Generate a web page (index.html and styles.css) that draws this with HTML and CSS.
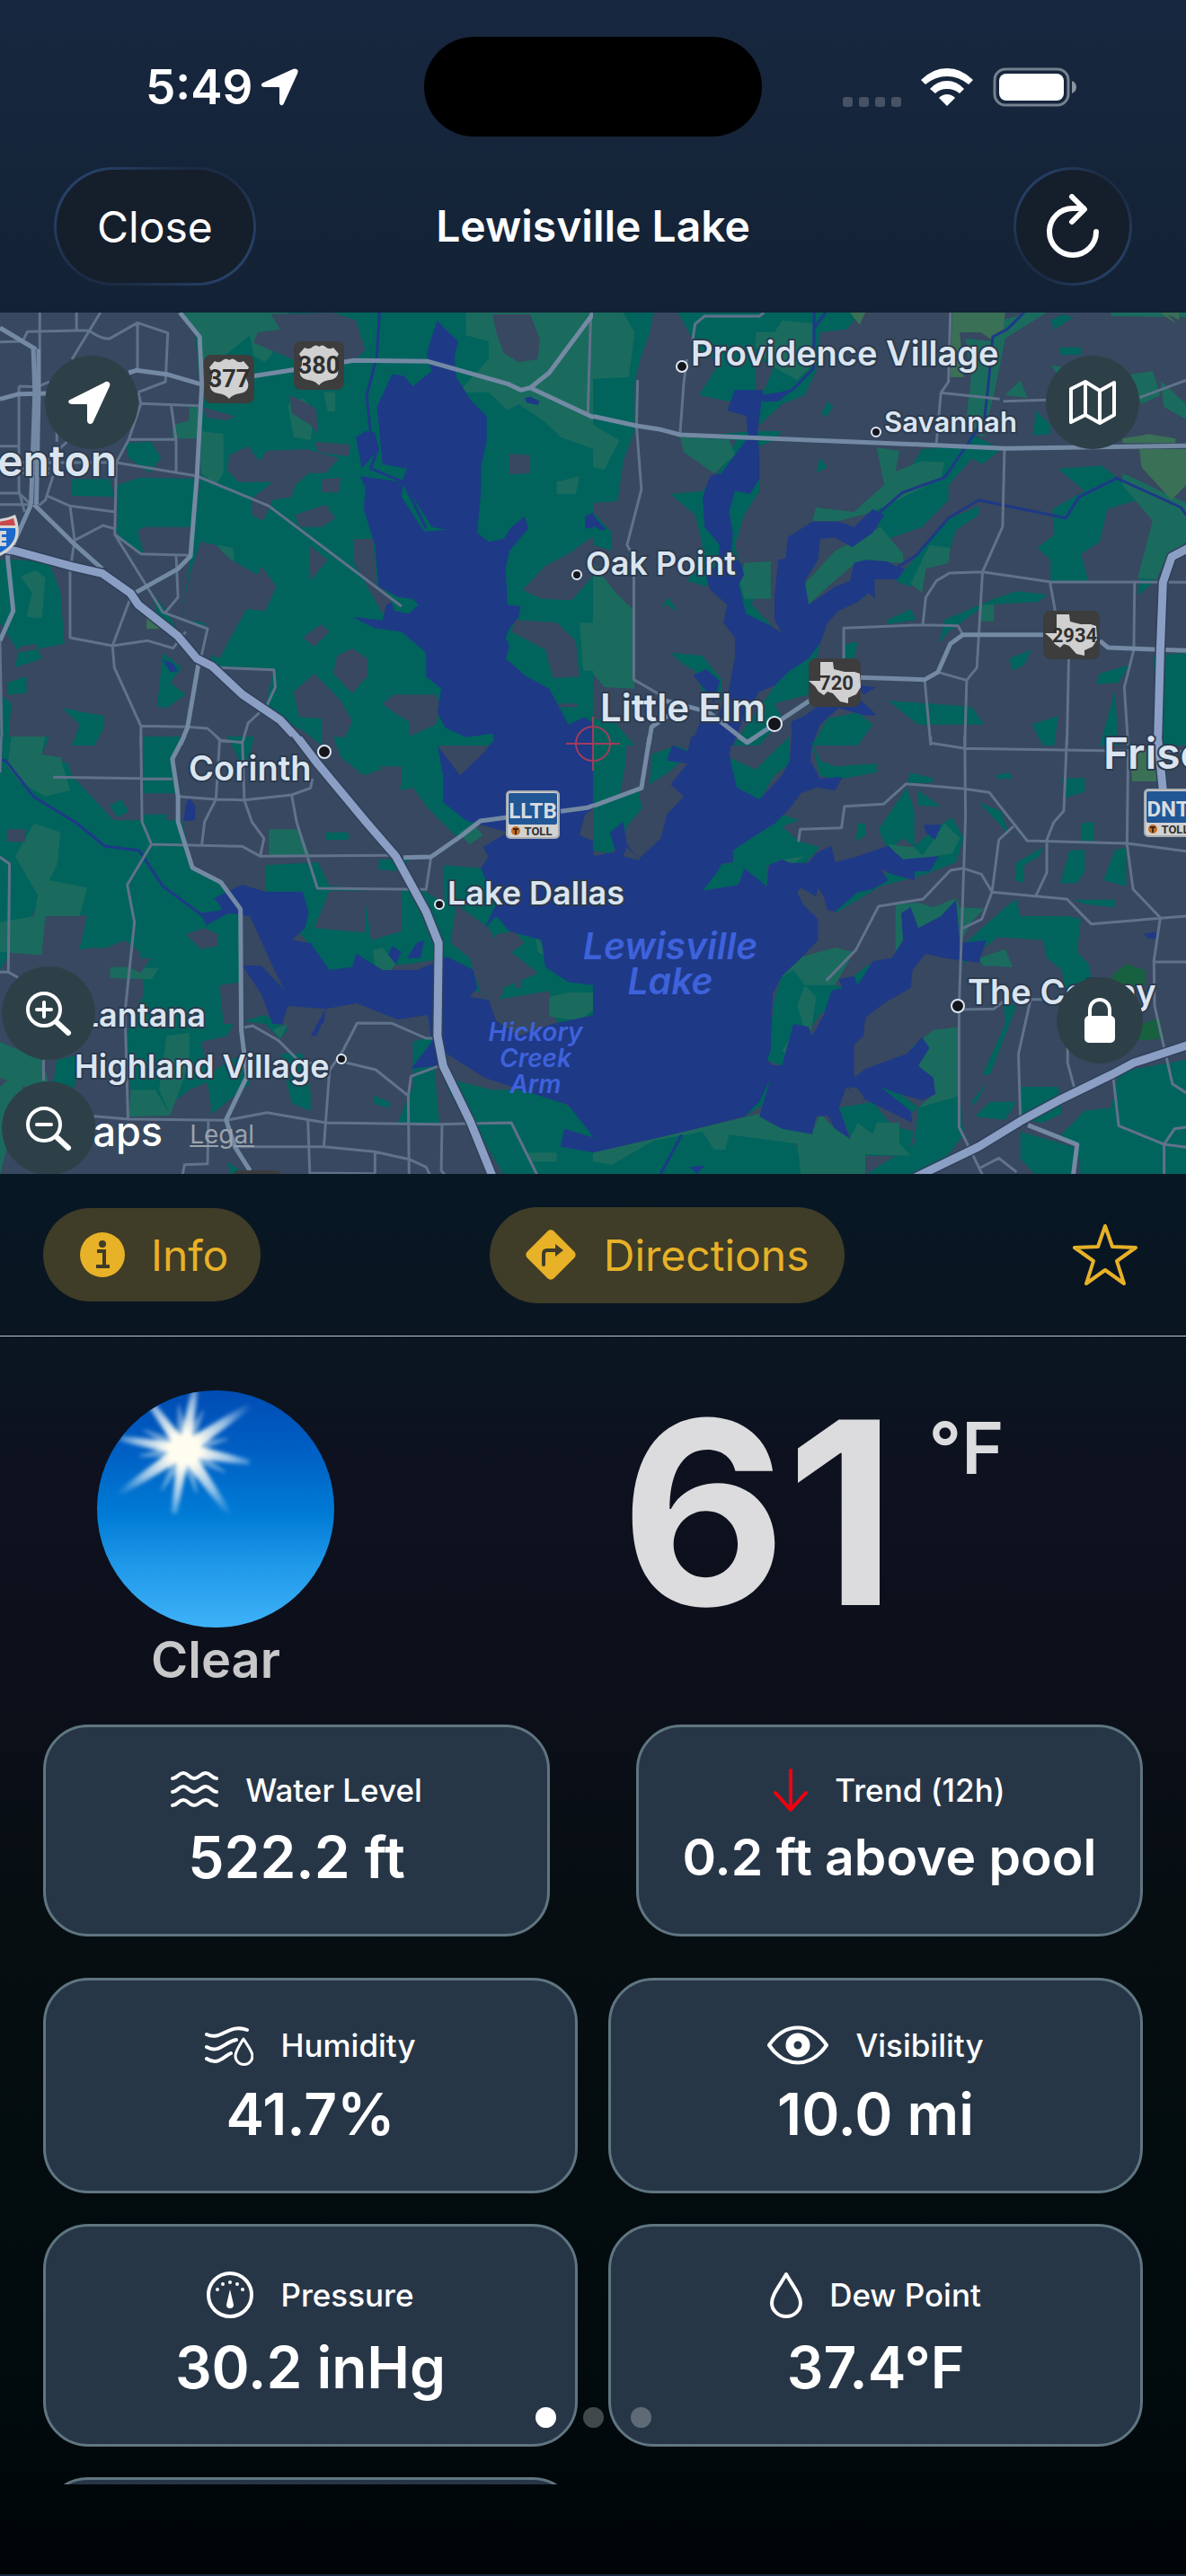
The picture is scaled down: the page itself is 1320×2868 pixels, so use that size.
FILE: index.html
```html
<!DOCTYPE html>
<html lang="en">
<head>
    <meta charset="UTF-8">
    <meta name="viewport" content="width=device-width, initial-scale=1">
    <title>Lewisville Lake</title>
    <link rel="stylesheet" href="styles.css">
</head>
<body>
    <header class="header">
        <div class="status">
            <div class="status-left">
                <span class="time">5:49</span>
                <svg class="status-arrow" viewBox="0 0 44 44"><path d="M41 2C43 3 43 4 42 7L27 40C26 43 22 43 22 39L22 23Q22 22 21 22L5 22C1 22 1 18 4 17L37 2Q39 1 41 2Z" fill="#fff"/></svg>
            </div>
            <div class="island"></div>
            <div class="status-right">
                <div class="signal"><i></i><i></i><i></i><i></i></div>
                <svg class="wifi" viewBox="0 0 58 42" fill="#fff">
                    <path d="M0 13Q13 0 29 0T58 13L53 18Q42 9 29 9T5 18Z"/>
                    <path d="M10 23Q18 14 29 14T48 23L43 28Q37 23 29 23T16 28Z"/>
                    <path d="M20 33Q24 29 29 29T38 33L29 42Z"/>
                </svg>
                <svg class="battery" viewBox="0 0 94 44">
                    <rect x="2" y="2" width="82" height="40" rx="12" fill="none" stroke="#75808f" stroke-width="3"/>
                    <rect x="7" y="7" width="72" height="30" rx="8" fill="#fff"/>
                    <path d="M88 15Q93 17 93 22T88 29Z" fill="#8a93a0"/>
                </svg>
            </div>
        </div>
        <div class="nav">
            <button class="glass close">Close</button>
            <h1>Lewisville Lake</h1>
            <button class="glass refresh" aria-label="Refresh">
                <svg viewBox="0 0 58 72" fill="none" stroke="#fff" stroke-width="6" stroke-linecap="round" stroke-linejoin="round">
                    <path d="M55 42A26 26 0 1 1 29 16H41"/><path d="M28 3L42 17L28 31"/>
                </svg>
            </button>
        </div>
    </header>

    <section class="map">
        <svg class="map-art" viewBox="0 0 1320 959" preserveAspectRatio="xMidYMid slice">
            <defs>
                <path id="us" d="M12 7q5 3 9-1q4-3 7 0q4-3 7 0q4 4 9 1l6 7q-6 8-1 17q2 10-9 12q-8 1-12 6q-4-5-12-6q-11-2-9-12q5-9-1-17z" fill="#d0d0d0"/>
                <path id="texas" d="M15 4L29 4L30 12L42 15L53 15L59 17L60 32L55 40L46 44L46 50L37 48L29 39L23 37L19 41L13 37L9 31L2 25L15 25Z" fill="#d0d0d0"/>
            </defs>

            <!-- north west tile -->
            <svg class="tile" x="0" y="-8" width="661" height="490" viewBox="0 0 1568 1470" preserveAspectRatio="none">
                <path class="wood" d="M475 24H1568V1470H850L800 1420L740 1385L700 1340L723 1217L560 1205L548 1080L480 1050L503 838L530 570V300L515 100ZM330 460L400 455L425 510L395 560L340 510ZM190 580H290L302 640L190 635ZM310 600L370 575L520 580L508 740L380 740L340 770L310 760ZM50 850L130 860L160 960L170 1130L50 1160L0 1060V850ZM20 1260L70 1240V1295L20 1300ZM165 1345L225 1360L275 1370V1410L250 1470H190L210 1400ZM430 1160L480 1210L450 1260L490 1300L440 1345L415 1340ZM400 960L440 1020L470 1090L420 1050ZM40 1210L110 1180L95 1130L50 1140ZM0 1300L30 1330L20 1470H0ZM300 740L360 735L380 830L320 780Z"/>
                <path class="meadow" d="M475 24H760L770 80L700 190L670 170L660 100L560 200L533 190L520 95ZM760 330L800 310L830 350L820 450L775 440ZM530 420L590 430V560L570 600L530 560ZM575 800L615 810L625 940L655 945L630 1015L570 1010ZM1230 24H1568V480L1480 440L1440 390L1370 330L1340 350L1290 290H1210L1290 180V120L1230 100ZM55 905L95 885L120 910L110 1045L70 1040L85 960ZM455 400L500 385V340H525V445H455ZM855 290H885V355H865ZM1470 590L1530 570L1520 630H1470ZM1530 1060H1568V1220H1540Z"/>
                <path class="land" d="M715 30L880 24L940 50L965 150L930 190L800 195L670 125L680 90L740 80ZM605 500L655 470L685 520L705 485L810 480L895 510L860 560H815L780 600L770 640L720 650L695 720L665 700V645L720 590H630L600 550ZM765 300L800 320L835 345L840 430L820 400L770 360ZM535 340L620 370L600 385L545 375ZM830 455L925 465L920 505L840 490ZM850 580L900 575L895 625H850ZM780 700L860 665L885 710L850 740H790ZM530 790L570 800L610 850L680 900L690 870L730 940L700 1020L650 1015L600 1130L580 1180L545 1160L540 1060L480 1050L500 900ZM815 800L865 850L820 920ZM935 780H985L995 930L1055 1000L1010 1030L975 950L935 860ZM1010 1330L1040 1300L1150 1300L1165 1340L1150 1400L1080 1440V1390L1040 1360ZM775 1290L830 1230L900 1320L930 1390L900 1470H850V1380L790 1375ZM890 1170L930 1145L970 1180V1240L930 1295L880 1230ZM830 1080L850 1065L870 1090L830 1140L800 1110ZM1300 30H1400L1425 110L1420 180L1370 190L1330 160L1310 90ZM1568 770L1500 830L1440 870L1380 950L1430 980L1510 985L1568 900ZM1360 1050L1470 1060L1520 1120L1530 1240L1460 1245L1440 1150L1350 1090ZM1345 495L1400 500V560L1345 565ZM1475 1330H1525V1342H1475Z"/>
                <path class="water" d="M1155 50L1180 85L1210 120L1200 170L1205 240L1245 320L1285 370V450L1270 540V620L1260 760L1290 790L1330 780L1350 740L1385 705L1395 745L1345 820L1335 880L1340 1000L1375 1005L1370 1040L1345 1080L1335 1110L1345 1140L1335 1180L1390 1240L1450 1280L1480 1350L1500 1400L1545 1375L1568 1400V1470H1310L1300 1430L1230 1442L1175 1410L1155 1360L1165 1280L1125 1240V1160L1060 1090L990 1078L930 1040L1010 1052L1020 1000L1060 980L1000 940L990 800L975 740L960 680L965 610L950 570L1060 590L1075 545L1010 530L1000 400L995 340L1035 230L1065 235L1090 270L1140 220L1125 160ZM940 440L965 420L990 425L1000 480L955 545ZM1385 310L1400 305L1425 320L1420 333L1390 325ZM430 1185L455 1195L470 1220L450 1225ZM1545 705L1568 690V745H1545Z"/>
                <path class="wood" d="M1065 590L1120 700L1140 740L1180 750L1120 755L1060 640ZM1030 970L1090 980L1105 1000L1080 1030L1040 1020ZM1110 90L1150 50L1125 170L1100 200Z"/>
                <path class="olive" d="M387 1048H410L425 1080H387Z"/>
                <path class="stream" d="M1002 24L995 170L968 300L978 420L998 480L978 545L1065 590L1125 745"/>
                <path class="road" d="M105 24V145M202 24V85M265 24L190 180M0 122L60 120L72 88L235 83Q260 110 288 112L363 58L443 92L437 255L365 290M363 58V217M370 328L525 335M452 335L465 450V555M340 448H465M365 290L372 328L340 448L307 525L303 765L430 1025L548 1080L530 1180M307 525L520 570L710 670L1060 1005M50 270V620L65 690M50 270L100 272L130 255M0 470H50M0 627H50L82 665H0M122 635L185 670L305 690M185 670L197 785L185 885V1110L297 1137L390 1120L457 1145L490 1090M197 785L272 735L300 745M303 765L372 830L503 835M465 835L470 975L437 1025M345 975L297 1137L302 1210L372 1405V1470M372 1405L495 1408L548 1413L585 1455L640 1460L655 1395L685 1360M580 1210L723 1217L727 1275L705 1335M0 1120L5 1470M1560 24L1552 360M150 420V455M178 455L120 520M0 525L300 525M60 545H130M60 560H130M140 570L120 650L103 668"/>
                <path class="highway" d="M0 75L95 147M88 145L92 290L82 665M102 145V290L96 665M0 313L50 296L125 294M340 225L360 217L440 230L535 265M660 238L935 184L1130 187L1340 262L1375 283L1400 275L1568 375M475 24L527 105L533 265L520 570L503 838L470 880L350 965M1568 24L1450 225L1400 275M90 665L190 790L270 880M82 665L20 840L35 1020L0 1120M525 1190L510 1300L495 1410L475 1470"/>
                <path class="freeway-edge" d="M-10 810L40 820L150 858L190 872L270 895L345 962L365 1000L470 1105L520 1180L560 1205L640 1300L740 1385L805 1475"/>
                <path class="freeway" d="M-10 810L40 820L150 858L190 872L270 895L345 962L365 1000L470 1105L520 1180L560 1205L640 1300L740 1385L805 1475"/>
            </svg>

            <!-- north east tile -->
            <svg class="tile" x="660" y="-8" width="660" height="490" viewBox="0 0 1568 1470" preserveAspectRatio="none">
                <path class="wood" d="M0 24H160L150 90L125 180L110 260V420L80 520L65 655L0 660ZM300 24H710L670 80L600 90L590 220L560 300L500 330L440 400L430 340L280 300L330 200L300 150ZM225 24H300L340 60L300 180L270 130ZM430 420H500L480 450L440 470L440 620L400 700L375 800L385 850L430 950L420 1000L480 1080L400 1060L380 980L310 900L300 940L250 920L290 800L270 700L205 630L290 620L340 540L380 450L230 440ZM870 480L980 470L1010 500L940 600L940 650L870 740L760 790L740 690L800 620ZM1000 430L1080 480L1030 530L985 500ZM1020 670L1020 700L960 750L940 830L870 880L840 940L800 920L860 830L930 720ZM1230 545L1345 535L1390 580L1470 630L1440 650L1360 680L1340 790L1290 830L1310 920H1210V850L1175 810L1220 765L1215 680L1300 620ZM1445 910L1490 910L1470 940L1440 970ZM1060 980L1120 955L1200 965L1180 990L1040 1000L940 1090L915 1130L930 1050ZM780 1050L840 1015L855 1050L780 1065ZM205 1160L290 1170L340 1250L340 1320L290 1290L270 1220L240 1200ZM520 1200L600 1130L570 1300L480 1330L500 1380L440 1470H370ZM620 1380L700 1360L740 1400L700 1470H580ZM780 1320L1000 1340L1035 1400L860 1400ZM0 1380L60 1395L110 1470H0ZM1480 1170L1568 1160V1470H1500ZM1100 1180L1160 1150L1140 1200L1110 1220ZM1340 1230L1420 1200L1390 1260L1330 1265ZM180 1010L200 975L225 1025L195 1000ZM590 560L600 510L620 540ZM605 360L620 320L635 340L615 375ZM1235 140H1290V165H1235ZM1170 350L1210 400V430L1165 435ZM1240 30L1270 40L1220 80L1210 50ZM0 690L50 760V820L0 800ZM660 1180L665 1130L700 1125L690 1180ZM1160 1400L1230 1370L1220 1470H1190ZM1380 1290L1390 1470H1340L1360 1380Z"/>
                <path class="meadow" d="M0 24H80L110 90L95 240L0 245ZM0 400L70 450L30 550L0 540ZM430 90H480L500 50L580 60L588 190L540 250L470 200L430 140ZM230 440L360 450L375 500L320 560L240 490ZM750 475L810 485L800 555L870 520L930 525L920 580L740 690L650 720H580L590 675L690 690L770 600ZM985 110L1050 120L1080 50L1150 24H1200L1090 110L1060 300L1030 440L985 400L1000 240ZM400 860L470 855V980H400L390 930ZM640 820L760 740L820 830V860L700 855L620 940L570 1000L560 930ZM890 800L945 810L940 860L880 880L870 960L840 930ZM0 860L60 960L110 1020V1280L30 1275L0 1230ZM1025 1000H1060V1055H1025ZM1400 560L1568 660V790L1510 860L1490 915L1440 910L1480 720L1400 600ZM1090 300L1130 250L1150 310ZM1210 200L1260 210L1230 235ZM1420 230L1480 220L1500 300L1450 330ZM1500 250L1568 330V380L1510 340ZM1370 24H1568V40L1370 36Z"/>
                <path class="olive" d="M950 24H1090L1085 80L1055 115L1025 90H970L980 240H945ZM1445 480H1568V600L1530 650L1450 540ZM1400 445L1470 430L1540 445V460H1400ZM680 24H720L705 65ZM1500 24H1550V70Z"/>
                <path class="land" d="M430 180L480 200L450 290L430 280ZM1520 30L1568 100V60Z"/>
                <path class="water" d="M375 283H450L435 420L440 500V580L415 630L375 620L360 690L370 760L365 830L390 860L400 900L385 930L405 1030L470 1070L500 1095L480 1050V970L490 850L510 845L515 775L580 722L650 722L690 740L740 680L770 700L740 760L685 808L640 775L600 780L595 850L560 920L570 1000L640 940L680 920L690 860L720 850L780 855L800 872L825 880L805 915L745 915V980L730 960L700 990L650 1020L620 1060L600 1130L570 1180L520 1220L480 1270L440 1290L400 1370L370 1470H260L290 1370L330 1370L360 1280L375 1180V1110L345 1060L355 1000L310 950L300 910L330 860L335 800L295 740L290 640L310 570L340 560L375 500L410 440L405 370L355 350ZM525 1390L560 1370L600 1335L700 1310L750 1368L720 1370L650 1345L600 1400L580 1470H525ZM265 1235L300 1215L335 1255L320 1330L300 1290ZM440 300L525 285L490 320L450 322ZM700 1270L750 1275L715 1300ZM0 700L35 750H20L0 735Z"/>
                <path class="stream" d="M585 24L583 210L525 285L440 310M615 24L585 75M1140 24L1095 80L1057 105L1045 270L1035 380L930 575L818 625L755 695M1568 700L1555 675L1385 577L1285 640L1250 710L1020 650L940 710L855 835L800 880"/>
                <path class="road" d="M118 250L115 402L128 615L90 800L108 840V1250L190 1310M452 24L440 36H295L270 62L263 120M248 180L240 260L230 432M945 24L940 255L920 292L908 460M920 292L1075 313M1085 320L1200 316M1445 308L1568 250M1088 480L1083 740L1030 890L1015 1210L988 1252L983 1470M663 1180V1078L872 1067L965 1070L978 1100M872 1067L880 975L908 920L943 894L1030 890L1208 923L1568 925M1208 923L1222 1020M1432 925L1430 1150L1405 1275L1415 1470M912 1225L988 1252M877 1250L893 1470M1258 1180L1253 1470"/>
                <path class="highway" d="M0 370L115 402L180 415L230 432L870 465L1090 478L1568 469M408 1460L575 1318M705 1243L877 1250L912 1225L945 1130L978 1100H1190M1340 1120L1362 1143L1568 1153M190 1320L305 1358L408 1460M145 1480L155 1408L210 1360"/>
                <path class="freeway-edge" d="M1575 810L1530 840L1507 925L1500 1150L1493 1475"/>
                <path class="freeway" d="M1575 810L1530 840L1507 925L1500 1150L1493 1475"/>
            </svg>

            <!-- south west tile -->
            <svg class="tile" x="0" y="472" width="661" height="490" viewBox="0 0 1568 1470" preserveAspectRatio="none">
                <path class="wood" d="M0 0H130L110 60L180 90L190 130L300 280H480L510 440L580 490L620 560H640V900L600 1000L530 1020L560 1150L500 1180L420 1260L345 1180L330 1000L380 860L370 720L330 680L270 710H210L230 600L120 580V520L0 780ZM380 0H490L460 80L470 190H380ZM600 0H670L660 60L640 100ZM880 0L1160 30L1205 220L1230 280L1260 290L1210 340L1130 240L1090 170L1060 180L1030 100L960 130L900 70ZM700 430L840 420L870 500L960 510L980 680L1060 650V510H1110L1180 560V740L1080 760L940 770L860 790L820 700L700 520ZM380 260L440 260V280H380ZM860 320H920V345H860ZM1000 410H1080L1060 450L1000 445ZM1170 430L1280 440L1350 640L1440 650L1450 740L1568 830V1100L1480 1000L1450 850L1310 880L1240 840L1180 760ZM740 1060H800L820 1190V1250L770 1225ZM1090 1020L1140 1000L1160 1290H1050L1090 1170ZM1170 1140L1300 1180L1420 1180L1568 1280V1464H1330L1300 1400L1250 1290L1190 1200ZM600 1420L650 1464H610ZM150 1080L220 1060L180 1240L130 1250ZM985 1200L1030 1220V1240L990 1230ZM640 950L700 930L760 980L740 1010L700 960ZM290 230L320 210L340 250L310 270ZM545 1130L640 1060L660 1160L560 1260Z"/>
                <path class="meadow" d="M30 0H120L110 60L160 70L185 180L120 200L50 150L20 100ZM90 290L160 320L150 430L130 480L230 505L210 600L120 600L110 730L0 720V620L90 600L100 530L40 400ZM290 760L345 770L420 775L400 810L290 808ZM710 310H790L820 400L710 395ZM345 1180H410L450 1265L340 1270ZM440 1000L500 990V1090L450 1265L420 1180ZM0 1020L110 1080L130 1160L60 1170L0 1464ZM1210 320L1250 290L1275 330L1240 360ZM985 715L1010 705L1045 760L1025 790L990 765ZM1410 645L1450 740L1420 720ZM1450 870L1500 855H1568V910L1530 950L1450 935ZM1390 1390H1470V1420H1400ZM720 980L760 960L740 1010Z"/>
                <path class="land" d="M18 310H66V352H18ZM190 720L240 705L340 710L360 740L400 740L370 790L340 770H290V805L330 810L310 870H250L240 800L190 770ZM490 660L540 640L575 660V700L530 710ZM870 515H965V655L830 640ZM1205 560L1290 640L1310 680L1420 790L1330 840L1270 860L1240 740L1190 690ZM1310 660L1360 650L1385 690L1340 730L1310 700ZM1290 800L1330 850L1310 900L1280 860ZM580 830L640 820L690 900L640 960H590ZM1000 100H1060L1060 170L1020 120ZM0 1140L20 1150L0 1170Z"/>
                <path class="water" d="M1310 0H1568V230L1530 330L1568 350V830L1500 820L1440 770L1430 680L1345 650L1310 600L1280 640L1310 560L1270 440L1290 400L1275 370L1340 320L1230 280L1170 220V130L1155 30L1215 130L1280 50ZM565 540L640 495L700 518H800L815 590L805 640L770 680L820 690L870 780L930 770L940 725L1010 780H1100L1140 760L1180 735L1250 780L1260 840L1240 870L1290 880L1310 950L1370 1000L1460 960L1568 930V1390L1480 1370L1490 1310L1568 1340L1500 1230L1400 1190L1280 1140L1180 1060L1150 1100L1085 1110L1140 1020L1130 930L1050 945L940 890L850 960L835 1000L820 1000L860 910L760 900L745 960L720 960L690 860L640 765H690L750 845L710 740L660 600L605 590L545 630L530 590L590 580ZM500 205L515 230V280L485 282L490 230ZM1025 730L1035 700L1060 720L1045 760ZM1100 690L1120 680L1110 740L1075 740Z"/>
                <path class="land" d="M1530 330L1568 310V240L1545 260ZM860 910L945 890L960 920L900 940L850 1000ZM1362 770H1375V840H1362Z"/>
                <path class="stream" d="M0 78L15 80L88 200L200 287L278 367L367 380L430 500L540 603L600 575"/>
                <path class="road" d="M372 0L375 285L400 360L336 495L355 620L330 920L338 1278M140 136L455 142M470 200L570 210L645 212L770 195L820 172L825 140M570 0L580 12L640 20L645 0M640 20L645 212L665 285L697 340L687 400M580 12L570 210L540 285L533 360M770 195L783 285L838 507L1125 511L1138 402M400 360L640 367L687 400L1045 397M645 972L667 966L735 1015L790 1085L870 1100M855 1370L870 1115L905 1050L943 957L1035 958L1125 1008H1145M915 1090L992 1113L1078 1200L1080 1464M1155 1102L1085 1135L1078 1200M248 1268L338 1278L597 1282L705 1256L860 1290L1160 1295L1350 1290L1418 1464M550 1285L548 1427L487 1430L482 1464M813 1280L818 1464M620 1370H855L990 1387L1080 1412L1125 1438L1135 1464M990 1387V1464M818 1458L990 1460M1167 1295L1165 1450L1175 1464M115 1080V1150M3 0L0 120M0 403L25 425L22 787L48 805M0 787H22"/>
                <path class="highway" d="M490 -10L455 75L470 200V285L508 438L583 487L635 577L637 980L652 1135L597 1280L620 1370L660 1450M1065 404L1138 402L1220 330L1268 282L1340 270M1480 250L1550 238L1568 230"/>
                <path class="freeway-edge" d="M778 -10L835 85L965 283L1045 400L1125 585L1158 690L1155 1000L1170 1100L1243 1290L1302 1475"/>
                <path class="freeway" d="M778 -10L835 85L965 283L1045 400L1125 585L1158 690L1155 1000L1170 1100L1243 1290L1302 1475"/>
            </svg>

            <!-- south east tile -->
            <svg class="tile" x="660" y="472" width="660" height="490" viewBox="0 0 1568 1470" preserveAspectRatio="none">
                <path class="wood" d="M0 0H90L85 100L70 200L120 180L130 240L90 300L80 350L45 390L0 380ZM155 60L220 30L260 50L200 120L150 160ZM360 70L430 110L470 60L520 0L520 90L480 130L440 215L380 180ZM575 0L600 80L640 100L750 90V120L640 145L600 130ZM290 515L330 430L370 420V380L430 330L480 290L500 260L545 280L500 300L545 350L600 370L560 425L460 430L460 505L385 500ZM700 290H720V330L695 350ZM755 310L830 170L850 250V370L820 340L780 380ZM840 120L900 140L895 155H830ZM860 180L920 235L860 230ZM900 310L950 270L980 340L960 420L880 460L760 500L640 590V560L760 480L820 400ZM1240 140L1300 138V185L1250 205ZM1290 290L1325 285V350H1290ZM1260 380L1300 378V450L1280 490H1235ZM1350 480L1380 380L1410 370V500ZM1120 420L1190 370L1180 400L1140 430V490L1115 480ZM1100 560L1120 545L1130 600H1260L1290 610L1280 720L1310 760L1330 870L1250 860L1240 780L1200 740L1190 680L1070 670L980 760L975 700ZM1270 545H1380V570L1300 560ZM1085 880L1120 900L1050 1130L1030 1130L1090 960ZM1000 1220L1040 1160L1010 1230ZM1010 1270L1050 1220L1120 1220L1090 1280ZM1130 1170H1230L1240 1260L1190 1290L1130 1280ZM500 790L550 735L640 830L680 850L600 930L560 1000L500 1100L460 1080L480 880ZM650 840L730 760L740 790L680 870ZM860 1240L970 1200L980 1330L900 1464H720L850 1360ZM1130 1320L1270 1370V1464H1170L1130 1410ZM1390 1120L1568 1080V1464H1290L1280 1370L1230 1340L1300 1250L1370 1240ZM740 1170L790 1170L860 1240L840 1260L740 1190ZM0 1400L240 1320L400 1290L530 1330L560 1464H0ZM440 1200L470 1140L450 1230L400 1270ZM650 1240L740 1220L790 1300L850 1320L830 1400H700ZM1065 130L1100 120L1110 140L1070 142ZM1020 220L1080 250L1100 330L1080 300Z"/>
                <path class="meadow" d="M540 740L640 705L690 720L640 830L560 830L530 780L490 810ZM480 415L560 400L530 425ZM870 400L930 290L970 340L950 390L880 405ZM780 360L850 370L880 410L820 420ZM800 560L860 555L900 570L960 540L970 570L1035 575L1000 620L970 690L940 650L840 640L800 730ZM1020 740L1090 710L1110 770L1030 765ZM840 1040L900 980L970 970V1200L860 1240L905 1190L900 1140L860 1100L880 1040ZM540 900L560 830L590 870L570 1040L555 960ZM0 1390L240 1320L440 1260L580 1320L600 1260L640 1310L680 1340L700 1290L740 1330L750 1290H810V1360L840 1400L720 1395V1464H550L540 1360L360 1330L350 1380H320L290 1320L160 1350L50 1430L0 1420ZM0 860L25 890L15 960ZM500 1050L530 990L510 1060Z"/>
                <path class="olive" d="M1420 50H1490V150H1425Z"/>
                <path class="park" d="M1370 800L1410 760L1460 780V830L1390 840ZM1450 960L1500 940L1510 1010L1440 1015Z"/>
                <path class="water" d="M0 400L60 385L45 320L80 285L90 360L120 410L180 340L195 260L240 200L205 160L250 90L195 80L210 30L250 50L260 0H370L360 60L380 170L440 210L500 130L520 80L525 0H580L575 80L600 140L660 135L640 180L590 170L550 190L520 240L480 290L430 330L370 380V420L340 425L330 450L290 515L385 495L400 440L460 500L465 430L500 410L520 422H570L590 390L630 365L640 420L700 400L780 365L820 410L915 400L890 450L850 450V480L790 460L760 440L780 480L740 510L700 520L640 585L620 580L610 535L595 505L590 535L550 505L540 520L555 560L595 610V680L550 740L500 800L475 860L470 1050L460 1080L475 1098H500L530 960L570 970L580 1000L610 930L630 850L660 840L650 810L690 800L700 830L740 750L790 740L820 680L815 590L840 570L860 640L920 600L960 545L970 690L1040 680L1020 755L930 740L880 725L845 780L840 840L770 890L720 940L715 1000L650 1080L690 1030L690 1140L720 1110L830 1060L870 1005L890 1040L860 1100L900 1140L905 1195L870 1215L800 1190L760 1170L840 1250L845 1290L700 1200L670 1170L650 1240L680 1345L640 1310L620 1265L590 1270L580 1328L500 1310L440 1270L470 1140L440 1220L400 1270L240 1320L0 1390ZM875 295H920L905 345L880 320ZM255 1438L295 1433L275 1460ZM1455 660L1490 652V675H1470Z"/>
                <path class="land" d="M675 1170L700 1175L718 1205L700 1208ZM80 400L90 370L125 415Z"/>
                <path class="stream" d="M234 1330L178 1464"/>
                <path class="road" d="M983 0L985 270L968 900V1305L1030 1464M893 0V22L983 40L1350 47L1568 50M1253 0L1245 248L1218 287L1200 345V455L1170 535M1415 50L1412 360L1428 510L1500 605L1483 750L1485 900L1532 1160L1568 1190M543 352L548 310L657 305L665 233L768 226L828 158L983 175L1048 187L1148 348L1412 357L1568 383M1112 300L1073 345L1055 520L1028 610L975 642M617 815L695 713L755 567L873 543L945 447L978 440L1027 460L1055 520L1253 543L1317 626L1568 600M1483 753H1568M968 912L1060 910L1105 865M1230 878H1157L1125 1060L1130 1270M1255 1040V1090L1272 1170M1375 1130L1390 1300L1510 1362L1568 1372M1510 1464V1362L1538 1310L1568 1305M1025 1440L1073 1408L1120 1455"/>
                <path class="highway" d="M1150 1298L1280 1363L1270 1464M0 232L128 172L150 0M385 0L408 20L432 0"/>
                <path class="freeway-edge" d="M850 1474L1020 1370L1130 1285L1240 1210L1370 1130L1430 1090L1575 1030M1493 0L1507 180"/>
                <path class="freeway" d="M850 1474L1020 1370L1130 1285L1240 1210L1370 1130L1430 1090L1575 1030M1493 0L1507 180"/>
            </svg>

            <!-- crosshair -->
            <path d="M630 480H690M660 450V510M679 480A19 19 0 1 1 641 480A19 19 0 1 1 679 480" fill="none" stroke="#a23c5c" stroke-width="2"/>

            <!-- road shields -->
            <g transform="translate(227 47)"><rect class="plate" width="56" height="54" rx="8"/><use href="#us"/><text class="route" x="28" y="36" font-size="27">377</text></g>
            <g transform="translate(327 32)"><rect class="plate" width="56" height="54" rx="8"/><use href="#us"/><text class="route" x="28" y="36" font-size="27">380</text></g>
            <g transform="translate(1161 332)"><rect class="plate" width="63" height="54" rx="8"/><use href="#texas"/><text class="route" x="35" y="35" font-size="22">2934</text></g>
            <g transform="translate(900 385)"><rect class="plate" width="58" height="54" rx="8"/><use href="#texas" x="-2"/><text class="route" x="31" y="35" font-size="22">720</text></g>
            <g transform="translate(258 955)"><rect class="plate" width="56" height="54" rx="8"/><path d="M12 4H27V8H12Z" fill="#d0d0d0"/></g>
            <g transform="translate(563 532)">
                <rect width="60" height="54" rx="5" fill="#a9adb0"/><rect x="2" y="2" width="56" height="50" rx="4" fill="#d2d2d2"/>
                <rect x="3" y="3" width="54" height="35" rx="2" fill="#225796"/>
                <text class="toll-name" x="30" y="31">LLTB</text>
                <circle cx="11" cy="45" r="5" fill="#c56c20"/><path d="M8 43H14M11 43V49" stroke="#3b2a1c" stroke-width="2"/>
                <text class="toll" x="36" y="50">TOLL</text>
            </g>
            <g transform="translate(1273 530)">
                <rect width="60" height="54" rx="5" fill="#a9adb0"/><rect x="2" y="2" width="56" height="50" rx="4" fill="#d2d2d2"/>
                <rect x="3" y="3" width="54" height="35" rx="2" fill="#225796"/>
                <text class="toll-name" x="27" y="31">DNT</text>
                <circle cx="10" cy="45" r="5" fill="#c56c20"/><path d="M7 43H13M10 43V49" stroke="#3b2a1c" stroke-width="2"/>
                <text class="toll" x="35" y="50">TOLL</text>
            </g>
            <path d="M-20 226Q-2 234 17 225Q30 258 -2 272L-20 262Z" fill="#d5d5d5"/>
            <path d="M-20 230Q-2 236 15 229L17 237H-20Z" fill="#c9484a"/>
            <path d="M-20 240H17Q20 258 -3 269L-20 262Z" fill="#1d68cb"/>
            <path d="M-2 243H7V247H2V250H7V254H2V256H7V260H-2Z" fill="#d5d5d5"/>

            <!-- towns -->
            <g class="dots">
                <circle cx="759" cy="60" r="6"/><circle cx="975" cy="133" r="5"/><circle cx="642" cy="292" r="5"/><circle cx="862" cy="458" r="8"/>
                <circle cx="361" cy="489" r="7"/><circle cx="489" cy="659" r="5"/><circle cx="380" cy="831" r="5"/><circle cx="1066" cy="772" r="7"/>
            </g>
            <g class="towns">
                <text x="769" y="59" font-size="38">Providence Village</text>
                <text x="984" y="133" font-size="31">Savannah</text>
                <text x="652" y="292" font-size="36">Oak Point</text>
                <text x="668" y="455" font-size="42">Little Elm</text>
                <text x="210" y="521" font-size="38">Corinth</text>
                <text x="498" y="659" font-size="36">Lake Dallas</text>
                <text x="1228" y="508" font-size="48">Frisco</text>
                <text x="130" y="182" font-size="48" text-anchor="end">Denton</text>
                <text x="1077" y="770" font-size="38">The Colony</text>
                <text x="229" y="795" font-size="36" text-anchor="end">Lantana</text>
                <text x="83" y="852" font-size="36">Highland Village</text>
            </g>
            <g class="lakes">
                <text x="746" y="720" font-size="41">Lewisville</text>
                <text x="746" y="759" font-size="41">Lake</text>
                <text x="596" y="811" font-size="28">Hickory</text>
                <text x="596" y="840" font-size="28">Creek</text>
                <text x="596" y="869" font-size="28">Arm</text>
            </g>
            <text class="brand" x="181" y="928">Maps</text>
        </svg>
        <a class="legal" href="#legal">Legal</a>
        <button class="pin locate" aria-label="My location"><svg viewBox="0 0 104 104"><path d="M70 29C72 30 73 31 72 34L54 73C53 77 47 77 47 72V55Q47 54 46 54L30 54C26 54 25 50 28 49L66 30Q68 28 70 29Z" fill="#fff"/></svg></button>
        <button class="pin layers" aria-label="Map type"><svg viewBox="0 0 104 104" fill="none" stroke="#fff" stroke-width="4" stroke-linejoin="round"><path d="M28 37L44 29L60 39L76 30V66L60 75L44 66L28 74ZM44 29V66M60 39V75"/></svg></button>
        <button class="pin zoom-in" aria-label="Zoom in"><svg viewBox="0 0 104 104" fill="none" stroke="#fff" stroke-width="4" stroke-linecap="round"><circle cx="47" cy="48" r="18"/><path d="M39 48H55M47 40V56"/><path d="M61 62L74 74" stroke-width="6"/></svg></button>
        <button class="pin zoom-out" aria-label="Zoom out"><svg viewBox="0 0 104 104" fill="none" stroke="#fff" stroke-width="4" stroke-linecap="round"><circle cx="47" cy="48" r="18"/><path d="M39 48H55"/><path d="M61 62L74 74" stroke-width="6"/></svg></button>
        <button class="pin lock" aria-label="Lock map"><svg viewBox="0 0 96 96"><rect x="31" y="43" width="34" height="30" rx="5" fill="#fff"/><path d="M37 45V37C37 21 59 21 59 37V45" fill="none" stroke="#fff" stroke-width="4"/></svg></button>
    </section>

    <div class="actions">
        <button class="pill">
            <svg viewBox="0 0 52 52"><circle cx="26" cy="26" r="25" fill="#e7b128"/><circle cx="26" cy="14" r="4" fill="#3f3c27"/><path d="M20 22H28V38M19 39H34" fill="none" stroke="#3f3c27" stroke-width="4"/></svg>
            Info
        </button>
        <button class="pill wide">
            <svg viewBox="0 0 58 58"><rect x="8" y="8" width="42" height="42" rx="5" transform="rotate(45 29 29)" fill="#e7b128"/><path d="M21 40V28Q21 24 25 24H36" fill="none" stroke="#3f3c27" stroke-width="4" stroke-linecap="round"/><path d="M34 17L43 24L34 31Z" fill="#3f3c27"/></svg>
            Directions
        </button>
        <button class="star" aria-label="Favorite">
            <svg viewBox="0 0 72 72" fill="none" stroke="#e7b128" stroke-width="4" stroke-linejoin="round"><path d="M36 4L44 27L70 28L49 43L57 68L36 53L15 68L23 43L2 28L28 27Z"/></svg>
        </button>
    </div>

    <main class="weather">
        <section class="now">
            <div class="sky">
                <svg viewBox="0 0 264 264">
                    <defs>
                        <linearGradient id="skyfill" x1="0" y1="0" x2="0" y2="1"><stop offset="0" stop-color="#004cb4"/><stop offset=".25" stop-color="#005fc4"/><stop offset=".52" stop-color="#007bd5"/><stop offset=".75" stop-color="#219aea"/><stop offset="1" stop-color="#3fb2f8"/></linearGradient>
                        <radialGradient id="rayfill" gradientUnits="userSpaceOnUse" cx="0" cy="0" r="90"><stop offset=".2" stop-color="#fffdf0"/><stop offset=".6" stop-color="#d4e6f2" stop-opacity=".7"/><stop offset="1" stop-color="#a8d0f0" stop-opacity="0"/></radialGradient>
                        <clipPath id="disc"><circle cx="132" cy="132" r="132"/></clipPath>
                        <filter id="soft" x="-50%" y="-50%" width="200%" height="200%"><feGaussianBlur stdDeviation="2"/></filter>
                    </defs>
                    <g clip-path="url(#disc)">
                        <rect width="264" height="264" fill="url(#skyfill)"/>
                        <g transform="translate(97 66)" filter="url(#soft)" fill="url(#rayfill)">
                            <path d="M0-7L78-3V3L0 7Z" transform="rotate(234)"/><path d="M0-7L80-3V3L0 7Z" transform="rotate(-80)"/>
                            <path d="M0-8L94-3V3L0 8Z" transform="rotate(-34)"/><path d="M0-8L74-3V3L0 8Z" transform="rotate(11)"/>
                            <path d="M0-8L90-3V3L0 8Z" transform="rotate(55)"/><path d="M0-7L72-3V3L0 7Z" transform="rotate(99)"/>
                            <path d="M0-8L90-3V3L0 8Z" transform="rotate(146)"/><path d="M0-7L72-3V3L0 7Z" transform="rotate(190)"/>
                            <g opacity=".5">
                                <path d="M0-8L50-1V1L0 8Z" transform="rotate(-97)"/><path d="M0-8L48-1V1L0 8Z" transform="rotate(-64)"/>
                                <path d="M0-8L50-1V1L0 8Z" transform="rotate(206)"/><path d="M0-8L50-1V1L0 8Z" transform="rotate(-14)"/>
                                <path d="M0-8L52-1V1L0 8Z" transform="rotate(119)"/><path d="M0-8L52-1V1L0 8Z" transform="rotate(29)"/>
                                <path d="M0-8L50-1V1L0 8Z" transform="rotate(74)"/><path d="M0-8L50-1V1L0 8Z" transform="rotate(172)"/>
                            </g>
                            <circle r="17" fill="#fffdf0"/>
                        </g>
                    </g>
                </svg>
                <p>Clear</p>
            </div>
            <div class="temp"><span class="degrees">61</span><span class="unit">°F</span></div>
        </section>

        <section class="cards top">
            <article class="card">
                <h2><svg class="icon-waves" viewBox="0 0 53 54" fill="none" stroke="#fff" stroke-width="4" stroke-linecap="round"><path d="M2 14C8 14 8 8 14 8S20 14 26 14S33 8 39 8S45 14 51 14M2 29C8 29 8 23 14 23S20 29 26 29S33 23 39 23S45 29 51 29M2 44C8 44 8 38 14 38S20 44 26 44S33 38 39 38S45 44 51 44"/></svg>Water Level</h2>
                <p>522.2 ft</p>
            </article>
            <article class="card">
                <h2><svg class="icon-arrow" viewBox="0 0 38 54" fill="none" stroke="#f0000f" stroke-width="4" stroke-linecap="round" stroke-linejoin="round"><path d="M19 5V49M2 30L19 49L36 30"/></svg>Trend (12h)</h2>
                <p class="long">0.2 ft above pool</p>
            </article>
        </section>
        <section class="cards middle">
            <article class="card">
                <h2><svg class="icon-humid" viewBox="0 0 54 58" fill="none" stroke="#fff" stroke-width="4" stroke-linecap="round"><path d="M2 17C18 25 27 4 47 12M2 31C16 39 22 25 35 23M2 44C14 52 20 42 29 38"/><path d="M43 22C38 30 34 36 34 41A9 9 0 0 0 53 41C53 36 48 30 43 22Z" stroke-width="3" stroke-linejoin="round"/></svg>Humidity</h2>
                <p>41.7%</p>
            </article>
            <article class="card">
                <h2><svg class="icon-eye" viewBox="0 0 68 58"><path d="M2 29C20 3 48 3 66 29C48 55 20 55 2 29Z" fill="none" stroke="#fff" stroke-width="4"/><circle cx="34" cy="29" r="9" fill="none" stroke="#fff" stroke-width="9"/></svg>Visibility</h2>
                <p>10.0 mi</p>
            </article>
        </section>
        <section class="cards bottom">
            <article class="card">
                <h2><svg class="icon-gauge" viewBox="0 0 52 66"><circle cx="26" cy="33" r="24" fill="none" stroke="#fff" stroke-width="4"/><g fill="#fff"><circle cx="12" cy="27" r="2"/><circle cx="18" cy="21" r="2"/><circle cx="26" cy="19" r="2"/><circle cx="34" cy="21" r="2"/><circle cx="40" cy="27" r="2"/><path d="M26 27L30 44A4 4 0 0 1 22 44Z"/></g></svg>Pressure</h2>
                <p>30.2 inHg</p>
            </article>
            <article class="card">
                <h2><svg class="icon-drop" viewBox="0 0 36 66"><path d="M18 10C10 24 2 33 2 42A16 15 0 0 0 34 42C34 33 26 24 18 10Z" fill="none" stroke="#fff" stroke-width="4" stroke-linejoin="round"/></svg>Dew Point</h2>
                <p>37.4°F</p>
            </article>
            <article class="card"></article>
        </section>
        <nav class="pages" aria-label="Pages">
            <button class="current" aria-label="Page 1"></button>
            <button aria-label="Page 2"></button>
            <button aria-label="Page 3"></button>
        </nav>
    </main>
</body>
</html>
```

FILE: styles.css
```css
* {
    box-sizing: border-box;
}
body {
    margin: 0;
    padding-bottom: 100px;
    overflow-x: hidden;
    font-family: Inter, "Liberation Sans", sans-serif;
    color: #fff;
    background: linear-gradient(#17273f, #132234 12%, #071724 46%, #0a1520 53%, #0e111f 57%, #0b0f18 68%, #060e11 75%, #010a0d 93%, #000507);
}
h1, h2, p {
    margin: 0;
    font-weight: 600;
}
button {
    padding: 0;
    border: none;
    font-family: inherit;
    color: inherit;
    background: none;
    cursor: pointer;
}
svg {
    display: block;
}

/* status bar and title */
.status {
    display: grid;
    grid-template-columns: 1fr auto 1fr;
    align-items: center;
    padding-top: 41px;
}
.status-left {
    display: flex;
    align-items: center;
    gap: 8px;
    padding-left: 162px;
}
.time {
    font-size: 53px;
    font-weight: 600;
    line-height: 64px;
}
.status-arrow {
    width: 44px;
}
.island {
    width: 376px;
    height: 111px;
    border-radius: 56px;
    background: #000;
}
.status-right {
    display: flex;
    justify-content: flex-end;
    align-items: center;
    gap: 22px;
    padding-right: 121px;
}
.signal {
    display: flex;
    align-self: flex-end;
    gap: 7px;
}
.signal i {
    width: 11px;
    height: 11px;
    border-radius: 3px;
    background: #475264;
}
.wifi {
    width: 58px;
}
.battery {
    width: 94px;
}
.nav {
    display: grid;
    grid-template-columns: 1fr auto 1fr;
    align-items: center;
    padding: 34px 60px 30px;
}
.nav h1 {
    font-size: 48px;
    line-height: 60px;
}
.glass {
    height: 132px;
    border: 3px solid transparent;
    border-radius: 66px;
    background: linear-gradient(#151e2b, #151e2b) padding-box, linear-gradient(135deg, #2b4a76, #1c2c45 40%, #1c2c45 60%, #2b4a76) border-box;
}
.close {
    justify-self: start;
    padding: 0 45px;
    font-size: 48px;
}
.refresh {
    justify-self: end;
    display: grid;
    place-items: center;
    width: 132px;
}
.refresh svg {
    width: 58px;
}

/* map */
.map {
    position: relative;
    overflow: hidden;
}
.map-art {
    width: 100%;
    background: #374860;
}
.tile path {
    vector-effect: non-scaling-stroke;
}
.wood {
    fill: #00645d;
}
.meadow {
    fill: #1a6b5e;
}
.olive {
    fill: #3a7056;
}
.park {
    fill: #176040;
}
.land {
    fill: #374860;
}
.water {
    fill: #1e3986;
}
.stream, .road, .highway, .freeway, .freeway-edge {
    fill: none;
    stroke-linejoin: round;
}
.stream {
    stroke: #1e3986;
    stroke-width: 3px;
}
.road {
    stroke: #61728b;
    stroke-width: 3px;
}
.highway {
    stroke: #7489a3;
    stroke-width: 5px;
}
.freeway-edge {
    stroke: #30405a;
    stroke-width: 12px;
}
.freeway {
    stroke: #8b9fc5;
    stroke-width: 9px;
}
.plate {
    fill: #3d3d3e;
}
.route, .toll-name, .toll {
    font-family: "Liberation Sans Narrow", "Roboto", sans-serif;
    font-weight: 700;
    text-anchor: middle;
    fill: #303030;
}
.toll-name {
    font-size: 24px;
    fill: #d8dce0;
}
.toll {
    font-size: 13px;
}
.dots {
    fill: #14161c;
    stroke: #dfe7f2;
    stroke-width: 2px;
}
.towns, .lakes, .brand {
    font-family: Inter, "Liberation Sans", sans-serif;
    font-weight: 600;
}
.towns {
    fill: #dae5f0;
    stroke: #2c3a4e;
    stroke-width: 4px;
    stroke-linejoin: round;
    paint-order: stroke;
}
.lakes {
    fill: #3e62db;
    font-style: italic;
    text-anchor: middle;
}
.brand {
    fill: #fff;
    font-size: 45px;
    font-weight: 500;
    text-anchor: end;
}
.legal {
    position: absolute;
    left: 16%;
    bottom: 28px;
    font-size: 28px;
    line-height: 32px;
    color: #9aa3ab;
}
.pin {
    position: absolute;
    width: 104px;
    height: 104px;
    border-radius: 50%;
    background: #2d4048;
}
.locate {
    top: 48px;
    left: 50px;
}
.layers {
    top: 48px;
    right: 52px;
}
.zoom-in {
    bottom: 127px;
    left: 2px;
}
.zoom-out {
    bottom: -1px;
    left: 2px;
}
.lock {
    right: 48px;
    bottom: 123px;
    width: 96px;
    height: 96px;
}

/* action row */
.actions {
    display: flex;
    justify-content: space-between;
    align-items: center;
    height: 181px;
    padding: 0 54px 0 48px;
    border-bottom: 1px solid #c3c9cd;
}
.pill {
    display: flex;
    align-items: center;
    gap: 28px;
    height: 104px;
    padding: 0 36px 0 40px;
    border-radius: 52px;
    font-size: 48px;
    color: #e7b128;
    background: #3f3c27;
}
.pill svg {
    width: 52px;
}
.wide {
    gap: 30px;
    height: 107px;
    padding: 0 39px;
    border-radius: 54px;
}
.wide svg {
    width: 58px;
}
.star svg {
    width: 72px;
}

/* weather */
.weather {
    position: relative;
    height: 1278px;
    overflow: hidden;
    padding: 60px 48px 0;
}
.now {
    display: grid;
    grid-template-columns: 384px 1fr;
    height: 372px;
}
.sky svg {
    width: 264px;
    margin: 0 auto;
}
.sky p {
    font-size: 56px;
    line-height: 72px;
    text-align: center;
    color: #c8c8ca;
}
.temp {
    display: flex;
    justify-content: center;
    gap: 36px;
    padding-left: 104px;
    color: #dcdcde;
}
.degrees {
    font-size: 284px;
    font-weight: 700;
    line-height: 272px;
}
.unit {
    font-size: 80px;
    font-weight: 600;
    line-height: 128px;
}
.cards {
    display: grid;
    grid-template-columns: 1fr 1fr;
    gap: 34px;
}
.top {
    column-gap: 96px;
    margin-bottom: 46px;
}
.middle {
    margin-bottom: 34px;
}
.card {
    display: flex;
    flex-direction: column;
    gap: 12px;
    min-height: 236px;
    padding: 43px 12px 49px;
    border: 3px solid #5f7681;
    border-radius: 50px;
    background: #273647;
}
.card h2 {
    display: flex;
    justify-content: center;
    align-items: center;
    gap: 30px;
    font-size: 35px;
    font-weight: 500;
    line-height: 54px;
}
.card p {
    font-size: 64px;
    line-height: 72px;
    text-align: center;
}
.card .long {
    font-size: 57px;
}
.icon-waves {
    width: 53px;
}
.icon-arrow {
    width: 38px;
}
.icon-humid {
    width: 54px;
}
.icon-eye {
    width: 68px;
}
.icon-gauge {
    width: 52px;
}
.icon-drop {
    width: 36px;
}
.pages {
    position: absolute;
    left: 0;
    right: 0;
    bottom: 63px;
    display: flex;
    justify-content: center;
    gap: 30px;
}
.pages button {
    width: 23px;
    height: 23px;
    border-radius: 50%;
    background: rgba(255, 255, 255, 0.26);
}
.pages .current {
    background: #fff;
}
```
